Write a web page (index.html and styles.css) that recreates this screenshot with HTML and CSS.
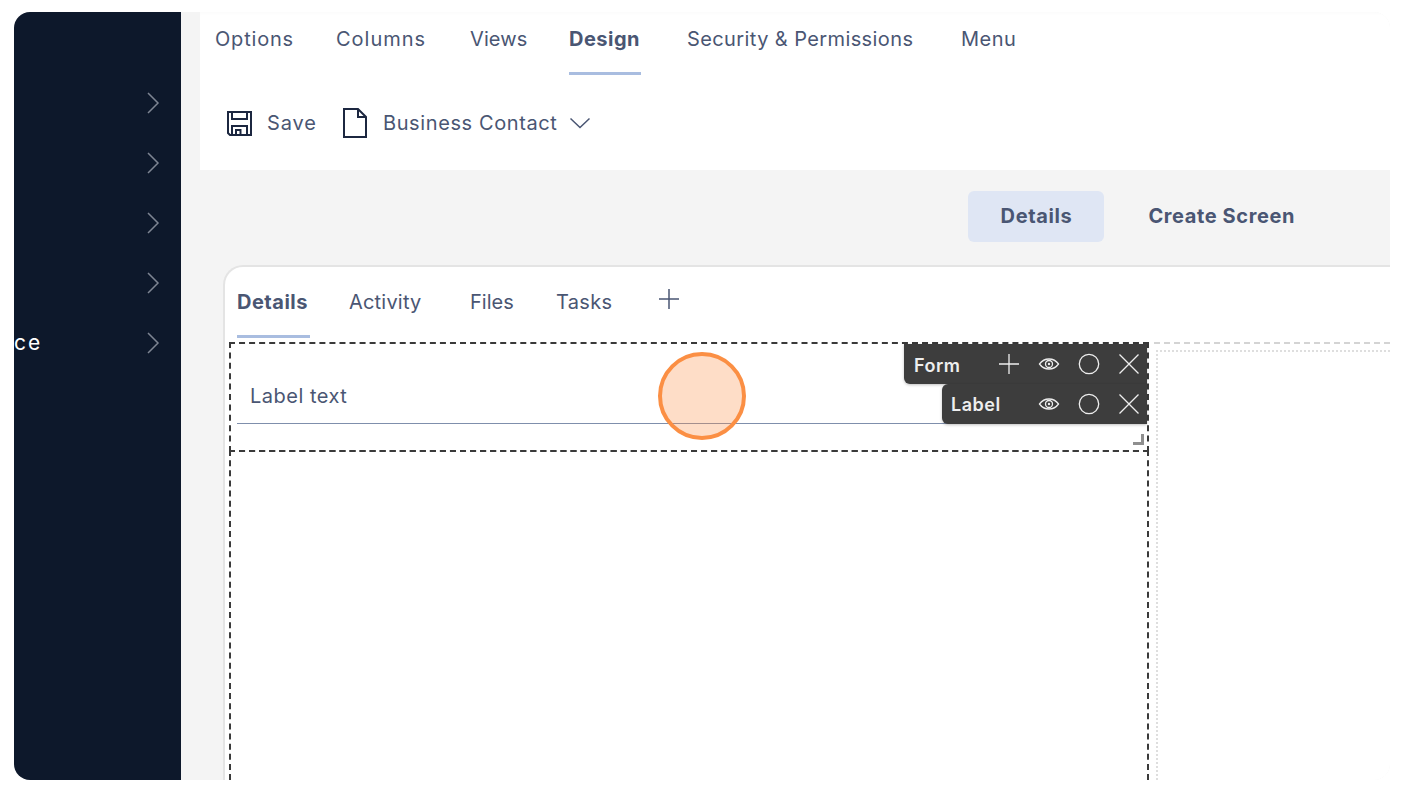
FILE: index.html
```html
<!DOCTYPE html>
<html lang="en">
<head>
    <meta charset="UTF-8">
    <title>Form Designer</title>
    <link rel="stylesheet" href="styles.css">
</head>
<body>
    <div class="app-frame">
        <aside class="sidebar">
            <div class="side-row"><span></span><svg class="chev" viewBox="0 0 14 22"><path d="M2 1l10 10L2 21"/></svg></div>
            <div class="side-row"><span></span><svg class="chev" viewBox="0 0 14 22"><path d="M2 1l10 10L2 21"/></svg></div>
            <div class="side-row"><span></span><svg class="chev" viewBox="0 0 14 22"><path d="M2 1l10 10L2 21"/></svg></div>
            <div class="side-row"><span></span><svg class="chev" viewBox="0 0 14 22"><path d="M2 1l10 10L2 21"/></svg></div>
            <div class="side-row"><span class="side-label">ce</span><svg class="chev" viewBox="0 0 14 22"><path d="M2 1l10 10L2 21"/></svg></div>
        </aside>

        <main class="main">
            <!-- Top header -->
            <div class="header">
                <nav class="top-tabs">
                    <a class="top-tab tab-options">Options</a>
                    <a class="top-tab tab-columns">Columns</a>
                    <a class="top-tab tab-views">Views</a>
                    <a class="top-tab tab-design active">Design</a>
                    <a class="top-tab tab-security">Security &amp; Permissions</a>
                    <a class="top-tab">Menu</a>
                </nav>
                <div class="toolbar">
                    <svg class="tool-icon" viewBox="0 0 25 25">
                        <path d="M1 1h23v23H3l-2-2z"/>
                        <path d="M5 1v7h15V1"/>
                        <path d="M5 24v-9h15v9"/>
                        <path d="M9 24v-5h4.500v5"/>
                    </svg>
                    <span class="tool-label save-label">Save</span>
                    <svg class="tool-icon doc-icon" viewBox="0 0 24 30">
                        <path d="M1 1h14l8 8v20H1z"/>
                        <path d="M15 1v8h8"/>
                    </svg>
                    <span class="tool-label">Business Contact</span>
                    <svg class="caret" viewBox="0 0 22 12"><path d="M1.500 1.500L11 10.500l9.500-9"/></svg>
                </div>
            </div>

            <!-- Canvas -->
            <div class="canvas">
                <div class="screen-tabs">
                    <button class="screen-btn active">Details</button>
                    <button class="screen-btn">Create Screen</button>
                </div>
                <div class="card">
                    <div class="card-tabs">
                        <a class="card-tab tab-details active">Details</a>
                        <a class="card-tab tab-activity">Activity</a>
                        <a class="card-tab tab-files">Files</a>
                        <a class="card-tab tab-tasks">Tasks</a>
                        <svg class="add-tab" viewBox="0 0 22 22"><path d="M11 1v20M1 11h20"/></svg>
                    </div>
                    <div class="design-area">
                        <div class="form-col">
                            <div class="field-box">
                                <div class="field-label">Label text</div>
                                <div class="field-line"></div>
                                <span class="resize-mark"></span>
                                <div class="handle handle-form">
                                    <span class="handle-name">Form</span>
                                    <svg class="h-icon" viewBox="0 0 22 22"><path d="M11 1v20M1 11h20"/></svg>
                                    <svg class="h-icon" viewBox="0 0 22 22"><path d="M1.500 11c2.500-3.500 5.500-5 9.500-5s7 1.500 9.500 5c-2.500 3.500-5.500 5-9.500 5s-7-1.500-9.500-5z"/><circle cx="11" cy="11" r="3.500"/><circle class="pupil" cx="11" cy="11" r="1.200"/></svg>
                                    <svg class="h-icon" viewBox="0 0 22 22"><circle cx="11" cy="11" r="9.700"/></svg>
                                    <svg class="h-icon" viewBox="0 0 22 22"><path d="M1.500 1.500l19 19M20.500 1.500l-19 19"/></svg>
                                </div>
                                <div class="handle handle-label">
                                    <span class="handle-name">Label</span>
                                    <svg class="h-icon" viewBox="0 0 22 22"><path d="M1.500 11c2.500-3.500 5.500-5 9.500-5s7 1.500 9.500 5c-2.500 3.500-5.500 5-9.500 5s-7-1.500-9.500-5z"/><circle cx="11" cy="11" r="3.500"/><circle class="pupil" cx="11" cy="11" r="1.200"/></svg>
                                    <svg class="h-icon" viewBox="0 0 22 22"><circle cx="11" cy="11" r="9.700"/></svg>
                                    <svg class="h-icon" viewBox="0 0 22 22"><path d="M1.500 1.500l19 19M20.500 1.500l-19 19"/></svg>
                                </div>
                            </div>
                            <div class="form-rest"></div>
                        </div>
                        <div class="side-col"><div class="side-inner"></div></div>
                    </div>
                </div>
            </div>
        </main>
    </div>

    <div class="click-dot"></div>
</body>
</html>
```

FILE: styles.css
```css
* {
    box-sizing: border-box;
}

html, body {
    height: 100%;
}

body {
    margin: 0;
    background: #fff;
    font-family: Inter, "Open Sans", sans-serif;
    color: #4a5673;
    letter-spacing: 0.5px;
    overflow: hidden;
}

.app-frame {
    display: flex;
    width: 1376px;
    height: 768px;
    margin: 12px 0 0 14px;
    border-radius: 16px;
    overflow: hidden;
}

/* Sidebar */
.sidebar {
    width: 167px;
    flex-shrink: 0;
    padding-top: 61px;
    background: #0d182b;
}

.side-row {
    display: flex;
    justify-content: space-between;
    align-items: center;
    height: 60px;
    padding-right: 21px;
}

.side-label {
    padding-bottom: 2px;
    color: #fff;
    font-size: 21px;
    letter-spacing: 2px;
}

.chev {
    width: 14px;
    height: 22px;
    fill: none;
    stroke: #7d8492;
    stroke-width: 1.500;
}

/* Main */
.main {
    flex: 1;
    min-width: 0;
    display: flex;
    flex-direction: column;
    padding-left: 19px;
    background: #f4f4f4;
}

.header {
    height: 158px;
    flex-shrink: 0;
    background: #fff;
    box-shadow: inset 0 4px 4px -3px rgba(0, 0, 0, 0.025);
}

.top-tabs {
    display: flex;
    height: 63px;
    padding-left: 15px;
}

.top-tab {
    position: relative;
    padding-top: 14px;
    font-size: 20px;
    line-height: 26px;
    white-space: nowrap;
}

.tab-options { width: 78px; margin-right: 43px; letter-spacing: 0.8px; }
.tab-columns { width: 90px; margin-right: 44px; letter-spacing: 1px; }
.tab-views { width: 57px; margin-right: 42px; letter-spacing: 0.1px; }
.tab-design { width: 72px; margin-right: 46px; }
.tab-security { width: 226px; margin-right: 48px; letter-spacing: 0.4px; }

.top-tab.active {
    font-weight: 700;
}

.top-tab.active::after {
    content: "";
    position: absolute;
    left: 0;
    right: 0;
    top: 60px;
    height: 3px;
    background: #a9bde0;
}

.toolbar {
    display: flex;
    align-items: center;
    height: 68px;
    margin-top: 14px;
    padding-left: 27px;
}

.tool-icon {
    width: 25px;
    height: 25px;
    fill: none;
    stroke: #1c2740;
    stroke-width: 2;
    flex-shrink: 0;
}

.doc-icon {
    width: 24px;
    height: 30px;
    margin-right: 16px;
}

.tool-label {
    font-size: 20px;
    letter-spacing: 0.6px;
    white-space: nowrap;
}

.save-label {
    width: 50px;
    margin: 0 26px 0 15px;
    letter-spacing: 0.9px;
}

.caret {
    width: 22px;
    height: 12px;
    margin-left: 12px;
    fill: none;
    stroke: #4a5673;
    stroke-width: 1.500;
}

/* Canvas */
.canvas {
    flex: 1;
    min-height: 0;
    display: flex;
    flex-direction: column;
    padding-left: 23px;
}

.screen-tabs {
    display: flex;
    justify-content: flex-end;
    gap: 8px;
    height: 95px;
    padding: 21px 59px 0 0;
}

.screen-btn {
    height: 51px;
    padding: 0 36px 2px;
    border: none;
    border-radius: 6px;
    background: transparent;
    color: #4a5673;
    font: 700 20px Inter, "Open Sans", sans-serif;
    letter-spacing: 0.6px;
}

.screen-btn.active {
    width: 136px;
    padding: 0 0 2px;
    background: #dfe6f4;
}

.card {
    flex: 1;
    min-height: 0;
    display: flex;
    flex-direction: column;
    background: #fff;
    border: 2px solid #e4e4e4;
    border-right: none;
    border-bottom: none;
    border-radius: 20px 0 0 0;
}

.card-tabs {
    display: flex;
    align-items: flex-start;
    height: 75px;
    padding-left: 12px;
}

.card-tab {
    position: relative;
    padding-top: 22px;
    font-size: 20px;
    line-height: 26px;
}

.tab-details { width: 73px; margin-right: 39px; }
.tab-activity { width: 73px; margin-right: 48px; letter-spacing: 0.2px; }
.tab-files { width: 43px; margin-right: 43px; letter-spacing: 0; }
.tab-tasks { width: 56px; margin-right: 46px; letter-spacing: 0.3px; }

.card-tab.active {
    font-weight: 700;
}

.card-tab.active::after {
    content: "";
    position: absolute;
    left: 0;
    right: 0;
    top: 68px;
    height: 3px;
    background: #a9bde0;
}

.add-tab {
    width: 22px;
    height: 22px;
    margin-top: 21px;
    fill: none;
    stroke: #4a5673;
    stroke-width: 1.500;
}

.design-area {
    flex: 1;
    min-height: 0;
    display: flex;
    padding-left: 4px;
}

.form-col {
    width: 920px;
    flex-shrink: 0;
    display: flex;
    flex-direction: column;
}

.field-box {
    position: relative;
    height: 110px;
    flex-shrink: 0;
    border: 2px dashed #3a3a3a;
}

.field-label {
    padding: 39px 0 0 19px;
    font-size: 20px;
    line-height: 26px;
}

.field-line {
    height: 1px;
    margin: 14px 0 0 6px;
    background: #7f8fac;
}

.resize-mark {
    position: absolute;
    right: 3px;
    bottom: 5px;
    width: 11px;
    height: 11px;
    border-right: 3px solid #8f8f8f;
    border-bottom: 3px solid #8f8f8f;
}

.handle {
    position: absolute;
    right: 0;
    display: flex;
    align-items: center;
    justify-content: flex-end;
    gap: 18px;
    height: 40px;
    padding-right: 7px;
    background: #3d3d3d;
    border-radius: 0 0 0 6px;
    box-shadow: 0 1px 3px rgba(0, 0, 0, 0.25);
}

.handle-form {
    top: 0;
    width: 243px;
}

.handle-label {
    top: 40px;
    width: 205px;
    border-radius: 6px 0 0 6px;
}

.handle-name {
    margin-right: auto;
    padding: 2px 0 0 10px;
    color: #eee;
    font-size: 18px;
    font-weight: 600;
}

.handle-label .handle-name {
    padding: 0 0 0 9px;
}

.h-icon {
    width: 22px;
    height: 22px;
    fill: none;
    stroke: #eee;
    stroke-width: 1.300;
}

.pupil {
    fill: #eee;
    stroke: none;
}

.form-rest {
    flex: 1;
    margin-top: -2px;
    border: 2px dashed #3a3a3a;
    border-bottom: none;
}

.side-col {
    flex: 1;
    margin-left: 5px;
    border-top: 2px dashed #d4d4d4;
    padding: 6px 0 0 2px;
}

.side-inner {
    height: 100%;
    border: 2px dotted #dedede;
    border-right: none;
    border-bottom: none;
}

/* Click marker from the recording */
.click-dot {
    position: absolute;
    left: 658px;
    top: 352px;
    width: 88px;
    height: 88px;
    border: 4px solid #fb8f44;
    border-radius: 50%;
    background: rgba(251, 143, 68, 0.3);
}
```
